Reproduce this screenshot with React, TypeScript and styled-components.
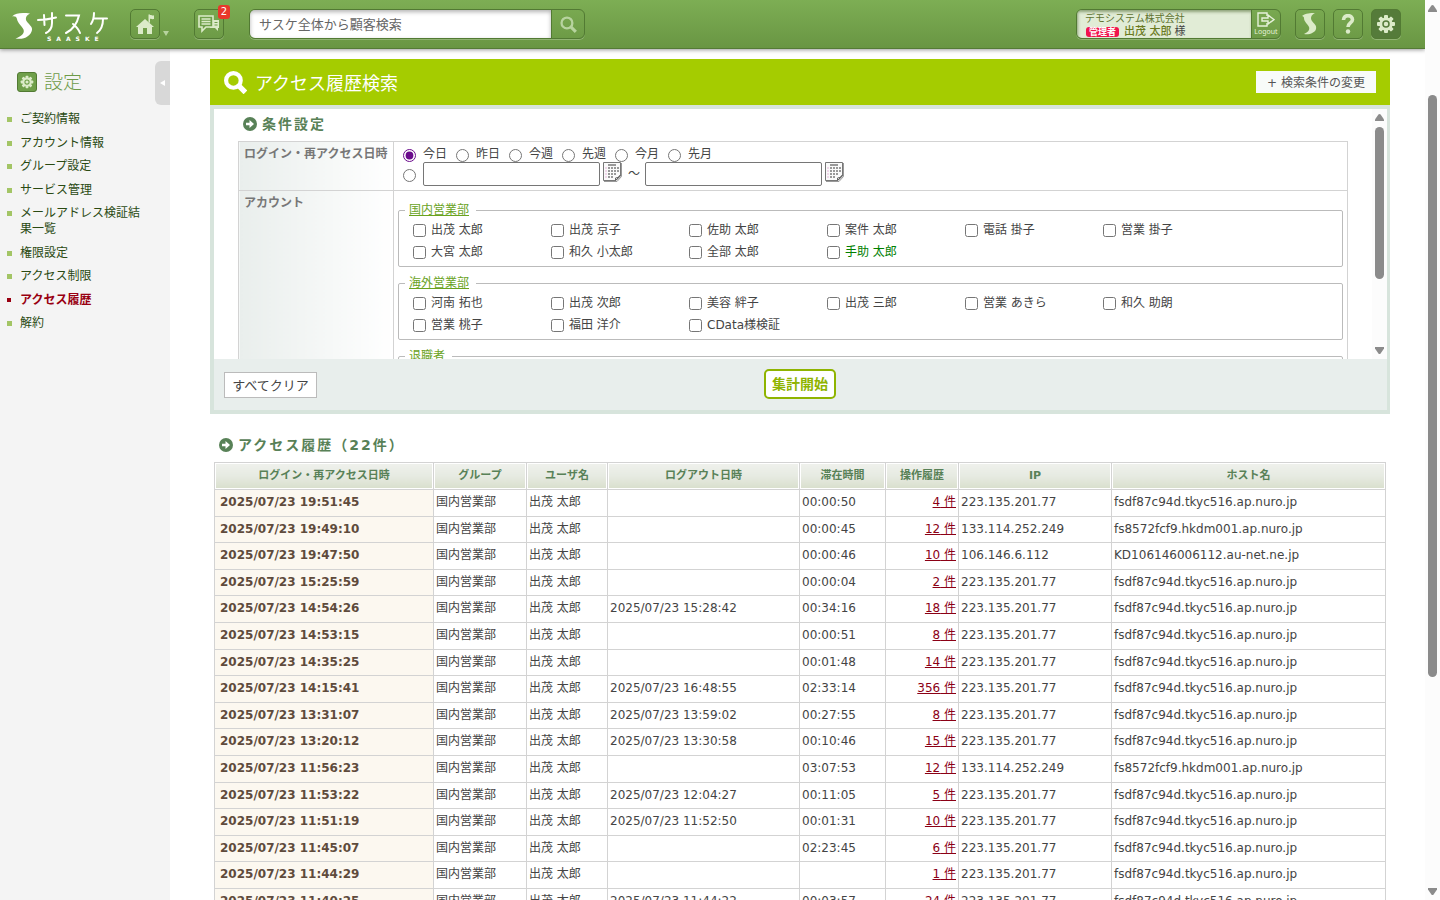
import React from "react";
import styled, { createGlobalStyle, css } from "styled-components";

const Global = createGlobalStyle`
  * { box-sizing: border-box; }
  html, body { margin: 0; padding: 0; height: 100%; }
  #root { height: 100%; }
  body {
    font: 12px/16px "DejaVu Sans", "Noto Sans CJK JP", sans-serif;
    color: #444;
    background: #fff;
    overflow: hidden;
  }
  table { font: inherit; color: inherit; }
  button, input { font-family: inherit; }
`;

/* ---------- page frame ---------- */

const Page = styled.div`
  display: flex;
  height: 100vh;
  overflow: hidden;
`;

const Viewport = styled.div`
  flex: 1;
  min-width: 0;
  display: flex;
  flex-direction: column;
  overflow: hidden;
`;

const Body = styled.div`
  flex: 1;
  min-height: 0;
  display: flex;
  overflow: hidden;
`;

/* ---------- scroll bars ---------- */

const Track = styled.div`
  flex: none;
  width: 15px;
  display: flex;
  flex-direction: column;
  align-items: center;
  padding: 5px 0;
  background: #fcfcfc;
`;

const Thumb = styled.div<{ $grow: number }>`
  flex: ${(p) => p.$grow} 0 0;
  width: 9px;
  border-radius: 5px;
  background: #8b8b8b;
`;

const Space = styled.div<{ $grow: number }>`
  flex: ${(p) => p.$grow} 0 0;
`;

const Arrow = ({ down }: { down?: boolean }) => (
  <svg width="9" height="7" viewBox="0 0 9 7" aria-hidden="true">
    <path
      d={down ? "M0 0H9V1.6L5.6 6.4Q4.5 7.4 3.4 6.4L0 1.6Z" : "M0 7H9V5.4L5.6 .6Q4.5-.4 3.4 .6L0 5.4Z"}
      fill="#8b8b8b"
    />
  </svg>
);

const ScrollBar = ({ before, thumb, after }: { before: number; thumb: number; after: number }) => (
  <Track aria-hidden="true">
    <Arrow />
    <Space $grow={before} />
    <Thumb $grow={thumb} />
    <Space $grow={after} />
    <Arrow down />
  </Track>
);

/* ---------- header ---------- */

const Header = styled.header`
  position: relative;
  z-index: 2;
  flex: none;
  height: 49px;
  padding: 9px 24px 0 12px;
  display: flex;
  align-items: flex-start;
  background: linear-gradient(#7dae54, #699643);
  border-bottom: 1px solid #557b36;
  box-shadow: 0 1px 4px rgba(0, 0, 0, 0.4);
`;

const Logo = styled.a`
  display: block;
  width: 98px;
  height: 34px;
  margin-right: 20px;
`;

const iconBox = css`
  display: flex;
  align-items: center;
  justify-content: center;
  width: 30px;
  height: 30px;
  padding: 0;
  border: 1px solid #527a33;
  border-radius: 5px;
  box-shadow: 0 1px 0 rgba(255, 255, 255, 0.25);
`;

const IconButton = styled.button<{ $active?: boolean }>`
  ${iconBox}
  position: relative;
  background: ${(p) => (p.$active ? "#557b3a" : "transparent")};
`;

const Caret = styled.span`
  width: 0;
  margin: 22px 25px 0 3px;
  border: 3px solid transparent;
  border-top: 5px solid #b7d39f;
  border-bottom: 0;
`;

const Badge = styled.span`
  position: absolute;
  top: -5px;
  right: -7px;
  width: 12px;
  height: 14px;
  border-radius: 3px;
  background: #e8392b;
  color: #fff;
  font-size: 10px;
  line-height: 14px;
  text-align: center;
`;

const SearchForm = styled.form`
  display: flex;
  width: 336px;
  height: 30px;
  margin-left: 25px;
  border: 1px solid #527a33;
  border-radius: 6px;
  box-shadow: 0 1px 0 rgba(255, 255, 255, 0.25);
  overflow: hidden;
`;

const SearchInput = styled.input`
  flex: 1;
  min-width: 0;
  border: 0;
  padding: 0 9px;
  font-size: 13px;
  background: #fff;
  box-shadow: inset 0 2px 4px rgba(0, 0, 0, 0.3);
  &::placeholder { color: #666; opacity: 1; }
`;

const SearchButton = styled.button`
  display: flex;
  align-items: center;
  justify-content: center;
  width: 33px;
  padding: 0;
  border: 0;
  border-left: 1px solid #527a33;
  background: transparent;
`;

const UserBox = styled.div`
  display: flex;
  width: 205px;
  height: 30px;
  margin-left: auto;
  margin-right: 14px;
  border: 1px solid #527a33;
  border-radius: 6px;
  overflow: hidden;
  box-shadow: 0 1px 0 rgba(255, 255, 255, 0.25);
`;

const UserInfo = styled.div`
  flex: 1;
  padding: 2px 8px;
  background: #e1ecd6;
  box-shadow: inset 1px 2px 3px rgba(60, 90, 30, 0.5);
  color: #5f7331;
  font-size: 10px;
  line-height: 13px;
`;

const UserName = styled.div`
  display: flex;
  align-items: center;
  font-size: 11px;
  color: #444;
  b { font-weight: 500; color: #6b7a1f; margin-right: 3px; }
`;

const Role = styled.span`
  padding: 0 3px;
  margin: 0 5px 0 1px;
  border-radius: 3px;
  background: #f0134d;
  color: #fff;
  font-size: 9px;
  line-height: 10px;
  font-weight: 700;
`;

const Logout = styled.button`
  display: flex;
  flex-direction: column;
  align-items: center;
  width: 29px;
  padding: 2px 0 0;
  border: 0;
  border-left: 1px solid #527a33;
  background: transparent;
  color: #e6f1da;
  font: 7px/10px "Noto Sans", sans-serif;
`;

const Tools = styled.div`
  display: flex;
  gap: 8px;
`;

/* ---------- side menu ---------- */

const Side = styled.aside`
  flex: none;
  display: flex;
  justify-content: space-between;
  align-items: flex-start;
  width: 170px;
  padding-top: 12px;
  background: #f4f4f4;
`;

const SideMain = styled.div`
  padding: 9px 0 0 6px;
  width: 147px;
`;

const SideTitle = styled.h1`
  display: flex;
  align-items: center;
  gap: 7px;
  margin: 0 0 13px;
  padding-left: 11px;
  font-size: 19px;
  line-height: 24px;
  font-weight: 300;
  color: #6d9a48;
`;

const GearTile = styled.span`
  display: flex;
  align-items: center;
  justify-content: center;
  width: 20px;
  height: 20px;
  border: 1px solid #527a33;
  border-radius: 3px;
  background: #6f9f4a;
`;

const Menu = styled.ul`
  list-style: none;
  margin: 0;
  padding: 0;
  display: flex;
  flex-direction: column;
`;

const MenuItem = styled.li<{ $current?: boolean }>`
  display: flex;
  gap: 8px;
  padding: 4px 0 4px 1px;
  line-height: 16px;
  &:nth-child(even) { padding-bottom: 3px; }
  &::before {
    content: "";
    flex: none;
    width: ${(p) => (p.$current ? 4 : 5)}px;
    height: ${(p) => (p.$current ? 4 : 5)}px;
    margin: 6px ${(p) => (p.$current ? 1 : 0)}px 0 0;
    background: ${(p) => (p.$current ? "#990011" : "#a3c565")};
  }
  a {
    color: ${(p) => (p.$current ? "#990011" : "#2a4a12")};
    font-weight: ${(p) => (p.$current ? 700 : 400)};
    text-decoration: none;
  }
`;

const Fold = styled.button`
  width: 15px;
  height: 44px;
  padding: 0;
  border: 0;
  border-radius: 6px 0 0 6px;
  background: #d8d8d8;
  display: flex;
  align-items: center;
  justify-content: center;
`;

/* ---------- search panel ---------- */

const Main = styled.main`
  flex: 1;
  min-width: 0;
  padding: 10px 35px 0 40px;
`;

const Banner = styled.div`
  display: flex;
  align-items: center;
  height: 46px;
  padding: 0 14px;
  background: #a5cc00;
  color: #fff;
  h2 {
    flex: 1;
    margin: 0 0 0 8px;
    padding-top: 4px;
    font-size: 18px;
    line-height: 24px;
    font-weight: 400;
  }
`;

const ChangeButton = styled.button`
  width: 120px;
  height: 22px;
  padding: 0 0 2px;
  border: 0;
  background: #f8fbf9;
  color: #555;
  font-size: 12px;
`;

const Panel = styled.section`
  border: 4px solid #d7e4dc;
  border-right-width: 3px;
  background: #e8eeec;
`;

const PanelScroll = styled.div`
  display: flex;
  height: 250px;
  background: #fff;
  overflow: hidden;
`;

const PanelContent = styled.div`
  flex: 1;
  min-width: 0;
  padding: 5px 24px 0;
`;

const SectionTitle = styled.h3`
  display: flex;
  align-items: center;
  gap: 5px;
  margin: 0;
  padding-left: 5px;
  font-size: 14px;
  line-height: 20px;
  font-weight: 700;
  letter-spacing: 2px;
  color: #588157;
`;

const Conditions = styled.table`
  width: 100%;
  margin-top: 7px;
  border-collapse: collapse;
  th, td {
    border: 1px solid #d3d3d3;
    text-align: left;
    vertical-align: top;
  }
  th {
    width: 155px;
    padding: 4px 5px;
    color: #777;
    background: linear-gradient(90deg, #e9eeec, #fff);
    white-space: nowrap;
  }
  td { padding: 2px 4px 6px; }
`;

const RadioRow = styled.div`
  display: flex;
  align-items: center;
  height: 20px;
  input { width: 13px; height: 13px; margin: 2px 7px 0 0; accent-color: #6a0a8c; }
`;

const RadioLabel = styled.label`
  display: flex;
  align-items: center;
  width: 53px;
  white-space: nowrap;
`;

const RadioBlock = styled.div`
  padding-left: 5px;
`;

const DateInput = styled.input.attrs({ type: "text" })`
  &&& {
    width: 177px;
    height: 24px;
    margin: 0 3px 0 0;
    border: 1px solid #767676;
    border-radius: 2px;
    background: #fff;
  }
`;

const CalButton = styled.button`
  width: 20px;
  height: 20px;
  margin-bottom: 4px;
  padding: 0;
  border: 0;
  background: none;
`;

const Tilde = styled.span`
  width: 22px;
  text-align: center;
`;

const Groups = styled.div`
  padding-top: 9px;
`;

const Group = styled.fieldset`
  margin: 0 0 8px;
  padding: 1px 14px 3px;
  border: 1px solid #bbb;
  border-radius: 2px;
  min-width: 0;
  legend {
    margin-left: -8px;
    padding: 0 7px 0 4px;
    line-height: 16px;
  }
  legend a { color: #6aa31e; text-decoration: underline; }
`;

const Members = styled.div`
  display: grid;
  grid-template-columns: repeat(6, 138px);
`;

const Member = styled.label<{ $own?: boolean }>`
  display: flex;
  align-items: center;
  gap: 5px;
  height: 22px;
  color: ${(p) => (p.$own ? "#008000" : "#444")};
  white-space: nowrap;
  input { width: 13px; height: 13px; margin: 1px 0 0; }
`;

const PanelFoot = styled.div`
  display: grid;
  grid-template-columns: 1fr auto 1fr;
  align-items: center;
  height: 51px;
  padding: 0 11px 0 10px;
`;

const ClearButton = styled.button`
  justify-self: start;
  width: 93px;
  height: 26px;
  padding: 0;
  border: 1px solid #bbb;
  background: #fff;
  color: #444;
  font-size: 13px;
`;

const StartButton = styled.button`
  width: 72px;
  height: 30px;
  margin-bottom: 2px;
  padding: 0;
  border: 2px solid #8fb400;
  border-radius: 5px;
  background: #fff;
  color: #8fb400;
  font-size: 14px;
  line-height: 20px;
  font-weight: 700;
`;

/* ---------- result list ---------- */

const Results = styled.section`
  padding: 21px 4px 0;
`;

const History = styled.table`
  width: 100%;
  margin-top: 7px;
  table-layout: fixed;
  border-collapse: collapse;
  th, td {
    height: 27px;
    border: 1px solid #d3d3d3;
    padding: 0 2px 2px;
    text-align: left;
    white-space: nowrap;
  }
  tbody tr:nth-child(5n + 2) > *,
  tbody tr:nth-child(5n + 4) > * { height: 26px; }
  tbody th {
    padding: 0 5px 2px;
    background: #fcf8f0;
    color: #5f4b3c;
    font-weight: 700;
  }
  thead th {
    padding-bottom: 0;
    text-align: center;
    color: #588157;
    font-size: 11px;
    background: linear-gradient(#eff1ec, #e6eae1 50%, #d8decb);
    box-shadow: inset 0 0 0 1px #fff;
  }
`;

const CountCell = styled.td`
  && { text-align: right; }
  a { color: #8b0015; text-decoration: underline; }
`;

/* ---------- drawings ---------- */

const PALE = "#dcebc9";

const LogoArt = () => (
  <svg width="98" height="34" viewBox="0 0 98 34" aria-hidden="true">
    <path
      d="M0 7.500C4 4 9 3.500 18 4.500C14.500 6 13 9 14.500 12C16 15 20.500 17 20 21C19 27 12 31 3.500 29.500C9 27.500 13 24.500 11.500 20.500C10 17 5.500 14 5 10C4.500 7.500 2.500 7 0 7.500Z"
      fill="#fff"
    />
    <g fill="none" stroke="#fff" strokeWidth="2" strokeLinecap="round">
      <path d="M26 11C32 11 38 10 44 8.500M32 6L32.500 16M40 4V14C40 19 38 22 34 24" />
      <path d="M54 6.500H67C65 15 60 21 54 24M61 15C64 17.500 67 21 68 24" />
      <path d="M82 4C82 9 81 12 79 15M82 9.500H95M91 10C91 17 89 21 85 24" />
    </g>
    <text x="35" y="32" fill="#fff" fontFamily="DejaVu Sans" fontWeight="700" fontSize="6" letterSpacing="5">
      SAASKE
    </text>
  </svg>
);

const SMark = () => (
  <svg width="18" height="24" viewBox="0 0 18 24" aria-hidden="true">
    <path
      d="M1 4C5 1 9 1 14 1C10 3 9 6 11 9C13 12 16 13 15 17C14 21 8 23 3 22C7 20 9 18 8 15C7 12 3 10 3 6C3 5 2 4 1 4Z"
      fill={PALE}
    />
  </svg>
);

const HomeArt = () => (
  <svg width="20" height="20" viewBox="0 0 20 20" fill={PALE} aria-hidden="true">
    <path d="M10 5L19 13H17V20H12V14H8V20H3V13H1Z" />
    <path d="M13.5 0.5H15V9L13.5 8ZM15 1C16.500 .5 17 2 19 1.300V5C17 5.500 16.500 4.500 15 5Z" />
  </svg>
);

const ChatArt = () => (
  <svg width="22" height="18" viewBox="0 0 22 18" aria-hidden="true">
    <path d="M14 5H21V13H20V16L17 13H12Z" fill={PALE} />
    <path d="M1 1H15V12H8L4 16V12H1Z" fill="#6f9f4a" stroke={PALE} strokeWidth="1.600" />
    <path d="M3.500 4H12.500M3.500 6.500H12.500M3.500 9H12.500" stroke={PALE} strokeWidth="1.300" />
    <path d="M16.500 7.500H19.500M16.500 10H19.500" stroke="#6f9f4a" />
  </svg>
);

const Gear = ({ size, hole }: { size: number; hole: string }) => (
  <svg width={size} height={size} viewBox="0 0 20 20" aria-hidden="true">
    <g fill={PALE}>
      {[0, 45, 90, 135].map((a) => (
        <rect key={a} x="8" y="1" width="4" height="18" rx="1" transform={`rotate(${a} 10 10)`} />
      ))}
      <circle cx="10" cy="10" r="6.600" />
    </g>
    <circle cx="10" cy="10" r="3" fill="none" stroke={hole} strokeWidth="1.500" />
  </svg>
);

const HelpArt = () => (
  <svg width="14" height="20" viewBox="0 0 14 20" aria-hidden="true">
    <path d="M2.500 6C2.500 0 11.500 .5 11.500 5.500C11.500 9 7 9 7 13" fill="none" stroke={PALE} strokeWidth="3.600" />
    <circle cx="7" cy="17.500" r="2.200" fill={PALE} />
  </svg>
);

const Lens = ({ size, color, width }: { size: number; color: string; width: number }) => (
  <svg width={size} height={size} viewBox="0 0 22 22" fill="none" stroke={color} strokeWidth={width} aria-hidden="true">
    <circle cx="9" cy="9" r="7" />
    <path d="M14 14L20.500 20.500" strokeWidth={width + 1} />
  </svg>
);

const LogoutArt = () => (
  <svg width="18" height="15" viewBox="0 0 18 15" fill="none" stroke="#e6f1da" strokeWidth="1.400" aria-hidden="true">
    <path d="M10 4V1H1V14H10V11" />
    <path d="M5 6H11V3L17 7.500L11 12V9H5Z" />
  </svg>
);

const Bullet = () => (
  <svg width="14" height="14" viewBox="0 0 14 14" aria-hidden="true">
    <circle cx="7" cy="7" r="7" fill="#588157" />
    <path d="M3 5.700H6.500V3L11 7L6.500 11V8.300H3Z" fill="#fff" />
  </svg>
);

const CalendarArt = () => (
  <svg width="20" height="20" viewBox="0 0 20 20" aria-hidden="true">
    <path d="M.5 .5H17.500V14L13 18.500H.5Z" fill="#fafafa" stroke="#777" />
    <path d="M18.500 1V14.500L14 19.500H1" fill="none" stroke="#999" />
    <path d="M5 3H13" stroke="#999" strokeWidth="2" />
    <path d="M2 6H4M2 9H4M2 12H4M2 15H4" stroke="#f0d8ea" strokeWidth="2" />
    <path d="M5 6H16M5 9H16M5 12H14M5 15H11" stroke="#999" strokeWidth="2" strokeDasharray="2 1" />
    <path d="M17.500 13.500L12.500 18.500V16Q16 16 16.500 13.500Z" fill="#fff" stroke="#666" />
  </svg>
);

/* ---------- data ---------- */

const MENU = [
  "ご契約情報",
  "アカウント情報",
  "グループ設定",
  "サービス管理",
  "メールアドレス検証結果一覧",
  "権限設定",
  "アクセス制限",
  "アクセス履歴",
  "解約",
];

const PERIODS = ["今日", "昨日", "今週", "先週", "今月", "先月"];

const GROUPS = [
  {
    name: "国内営業部",
    members: [
      "出茂 太郎", "出茂 京子", "佐助 太郎", "案件 太郎", "電話 掛子", "営業 掛子",
      "大宮 太郎", "和久 小太郎", "全部 太郎", "手助 太郎",
    ],
  },
  {
    name: "海外営業部",
    members: [
      "河南 拓也", "出茂 次郎", "美容 絆子", "出茂 三郎", "営業 あきら", "和久 助朗",
      "営業 桃子", "福田 洋介", "CData様検証",
    ],
  },
  { name: "退職者", members: [] },
];

const COLUMNS: [string, number | undefined][] = [
  ["ログイン・再アクセス日時", 219],
  ["グループ", 93],
  ["ユーザ名", 81],
  ["ログアウト日時", 192],
  ["滞在時間", 86],
  ["操作履歴", 73],
  ["IP", 153],
  ["ホスト名", undefined],
];

const NURO = "fsdf87c94d.tkyc516.ap.nuro.jp";
const HKDM = "fs8572fcf9.hkdm001.ap.nuro.jp";

const ROWS: [string, string, string, number, string, string][] = [
  ["19:51:45", "", "00:00:50", 4, "223.135.201.77", NURO],
  ["19:49:10", "", "00:00:45", 12, "133.114.252.249", HKDM],
  ["19:47:50", "", "00:00:46", 10, "106.146.6.112", "KD106146006112.au-net.ne.jp"],
  ["15:25:59", "", "00:00:04", 2, "223.135.201.77", NURO],
  ["14:54:26", "15:28:42", "00:34:16", 18, "223.135.201.77", NURO],
  ["14:53:15", "", "00:00:51", 8, "223.135.201.77", NURO],
  ["14:35:25", "", "00:01:48", 14, "223.135.201.77", NURO],
  ["14:15:41", "16:48:55", "02:33:14", 356, "223.135.201.77", NURO],
  ["13:31:07", "13:59:02", "00:27:55", 8, "223.135.201.77", NURO],
  ["13:20:12", "13:30:58", "00:10:46", 15, "223.135.201.77", NURO],
  ["11:56:23", "", "03:07:53", 12, "133.114.252.249", HKDM],
  ["11:53:22", "12:04:27", "00:11:05", 5, "223.135.201.77", NURO],
  ["11:51:19", "11:52:50", "00:01:31", 10, "223.135.201.77", NURO],
  ["11:45:07", "", "02:23:45", 6, "223.135.201.77", NURO],
  ["11:44:29", "", "", 1, "223.135.201.77", NURO],
  ["11:40:25", "11:44:22", "00:03:57", 24, "223.135.201.77", NURO],
];

const DAY = "2025/07/23";

/* ---------- page ---------- */

const TopBar = () => (
  <Header>
    <Logo href="#" aria-label="サスケ">
      <LogoArt />
    </Logo>
    <IconButton aria-label="ホーム">
      <HomeArt />
    </IconButton>
    <Caret />
    <IconButton aria-label="メッセージ">
      <ChatArt />
      <Badge>2</Badge>
    </IconButton>
    <SearchForm onSubmit={(e) => e.preventDefault()}>
      <SearchInput aria-label="顧客検索" placeholder="サスケ全体から顧客検索" />
      <SearchButton aria-label="検索">
        <Lens size={17} color="#b7d39f" width={3} />
      </SearchButton>
    </SearchForm>
    <UserBox>
      <UserInfo>
        デモシステム株式会社
        <UserName>
          <Role>管理者</Role>
          <b>出茂 太郎</b>様
        </UserName>
      </UserInfo>
      <Logout>
        <LogoutArt />
        Logout
      </Logout>
    </UserBox>
    <Tools>
      <IconButton aria-label="サスケ">
        <SMark />
      </IconButton>
      <IconButton aria-label="ヘルプ">
        <HelpArt />
      </IconButton>
      <IconButton aria-label="設定" $active>
        <Gear size={20} hole="#557b3a" />
      </IconButton>
    </Tools>
  </Header>
);

const SideMenu = () => (
  <Side>
    <SideMain>
      <SideTitle>
        <GearTile>
          <Gear size={14} hole="#6f9f4a" />
        </GearTile>
        設定
      </SideTitle>
      <Menu>
        {MENU.map((m) => (
          <MenuItem key={m} $current={m === "アクセス履歴"}>
            <a href="#">{m}</a>
          </MenuItem>
        ))}
      </Menu>
    </SideMain>
    <Fold aria-label="メニューを閉じる">
      <svg width="5" height="6" viewBox="0 0 5 6" aria-hidden="true">
        <path d="M5 0V6L0 3Z" fill="#fff" />
      </svg>
    </Fold>
  </Side>
);

const SearchPanel = () => (
  <>
    <Banner>
      <Lens size={23} color="#fff" width={4} />
      <h2>アクセス履歴検索</h2>
      <ChangeButton>+ 検索条件の変更</ChangeButton>
    </Banner>
    <Panel>
      <PanelScroll>
        <PanelContent>
          <SectionTitle>
            <Bullet />
            条件設定
          </SectionTitle>
          <Conditions>
            <tbody>
              <tr>
                <th scope="row">ログイン・再アクセス日時</th>
                <td>
                  <RadioBlock>
                    <RadioRow>
                      {PERIODS.map((p, i) => (
                        <RadioLabel key={p}>
                          <input type="radio" name="period" defaultChecked={i === 0} />
                          {p}
                        </RadioLabel>
                      ))}
                    </RadioRow>
                    <RadioRow>
                      <input type="radio" name="period" aria-label="期間指定" />
                      <DateInput aria-label="開始日" />
                      <CalButton aria-label="開始日を選択">
                        <CalendarArt />
                      </CalButton>
                      <Tilde>～</Tilde>
                      <DateInput aria-label="終了日" />
                      <CalButton aria-label="終了日を選択">
                        <CalendarArt />
                      </CalButton>
                    </RadioRow>
                  </RadioBlock>
                </td>
              </tr>
              <tr>
                <th scope="row">アカウント</th>
                <td>
                  <Groups>
                    {GROUPS.map((g) => (
                      <Group key={g.name}>
                        <legend>
                          <a href="#">{g.name}</a>
                        </legend>
                        <Members>
                          {g.members.map((m) => (
                            <Member key={m} $own={m === "手助 太郎"}>
                              <input type="checkbox" />
                              {m}
                            </Member>
                          ))}
                        </Members>
                      </Group>
                    ))}
                  </Groups>
                </td>
              </tr>
            </tbody>
          </Conditions>
        </PanelContent>
        <ScrollBar before={6} thumb={153} after={68} />
      </PanelScroll>
      <PanelFoot>
        <ClearButton>すべてクリア</ClearButton>
        <StartButton>集計開始</StartButton>
      </PanelFoot>
    </Panel>
  </>
);

const ResultList = () => (
  <Results>
    <SectionTitle>
      <Bullet />
      アクセス履歴（22件）
    </SectionTitle>
    <History>
      <colgroup>
        {COLUMNS.map(([name, width]) => (
          <col key={name} width={width} />
        ))}
      </colgroup>
      <thead>
        <tr>
          {COLUMNS.map(([name]) => (
            <th key={name} scope="col">{name}</th>
          ))}
        </tr>
      </thead>
      <tbody>
        {ROWS.map(([login, logout, stay, count, ip, host]) => (
          <tr key={login}>
            <th scope="row">{DAY} {login}</th>
            <td>国内営業部</td>
            <td>出茂 太郎</td>
            <td>{logout && `${DAY} ${logout}`}</td>
            <td>{stay}</td>
            <CountCell>
              <a href="#">{count} 件</a>
            </CountCell>
            <td>{ip}</td>
            <td>{host}</td>
          </tr>
        ))}
      </tbody>
    </History>
  </Results>
);

export default function App() {
  return (
    <>
      <Global />
      <Page>
        <Viewport>
          <TopBar />
          <Body>
            <SideMenu />
            <Main>
              <SearchPanel />
              <ResultList />
            </Main>
          </Body>
        </Viewport>
        <ScrollBar before={83} thumb={582} after={211} />
      </Page>
    </>
  );
}
